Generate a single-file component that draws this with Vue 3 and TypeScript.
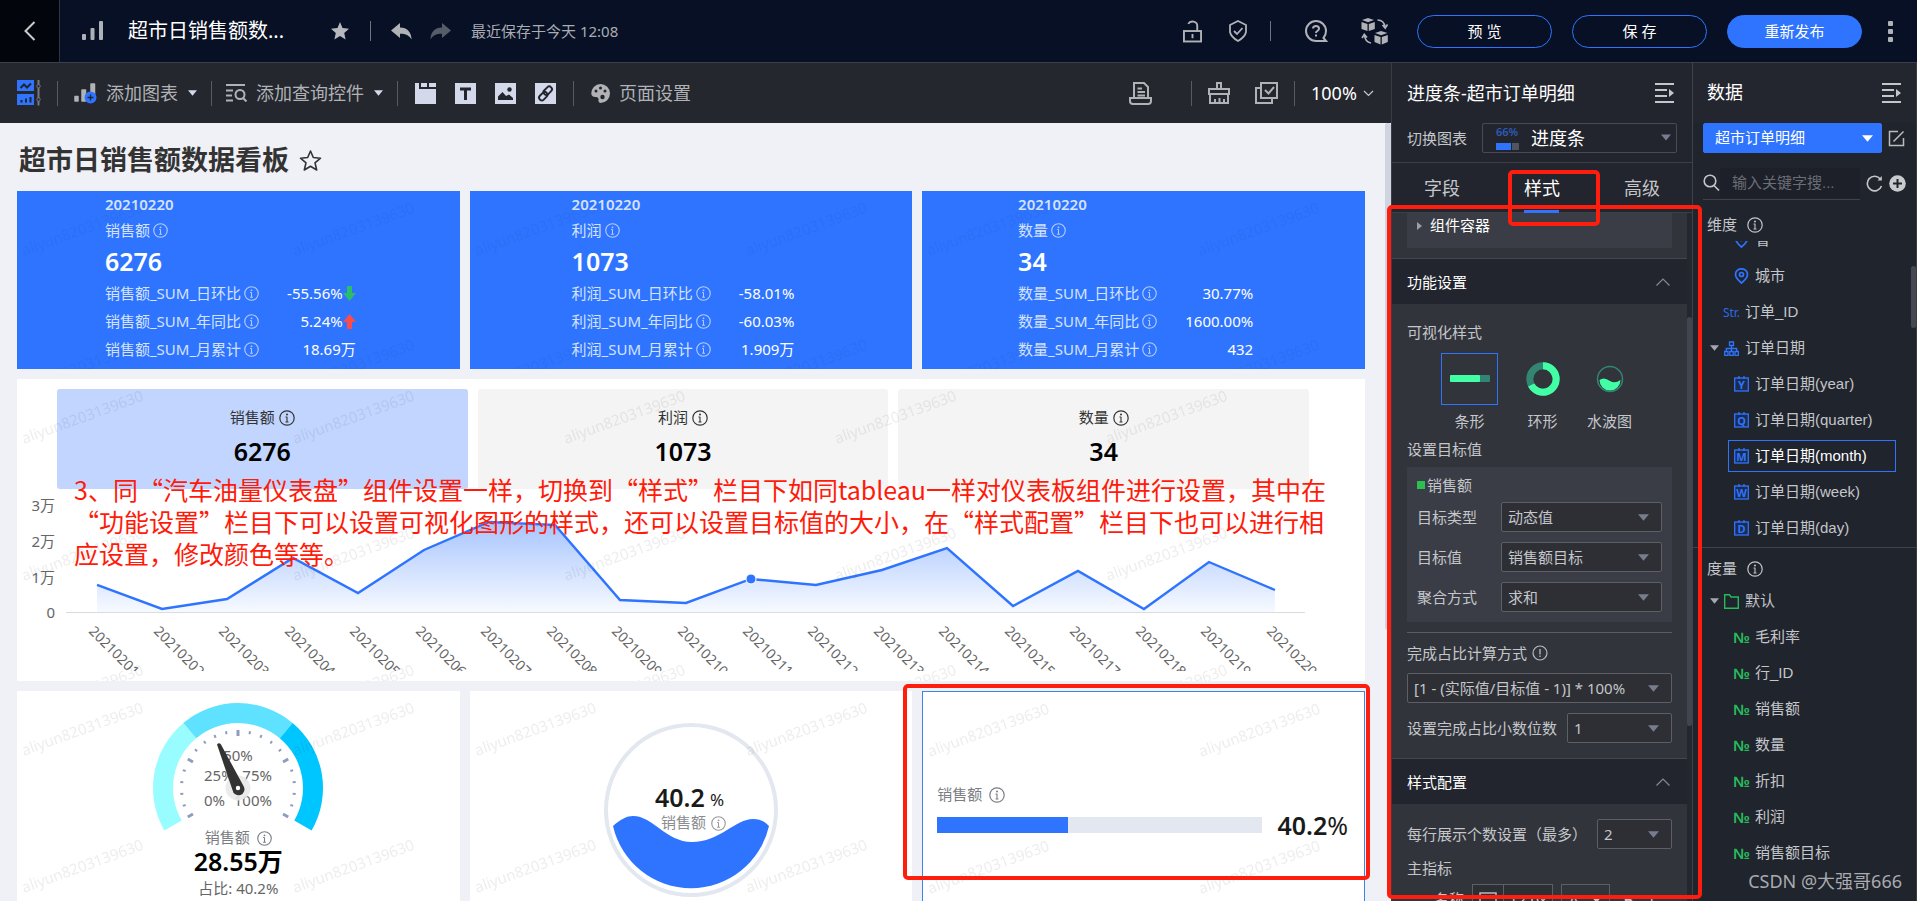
<script setup lang="ts">
import { ref } from 'vue'

interface Metric { label: string; value: string; trend?: 'up' | 'down' }
interface Kpi { name: string; value: string; rows: Metric[] }

const kpis: Kpi[] = [
  {
    name: '销售额', value: '6276', rows: [
      { label: '销售额_SUM_日环比', value: '-55.56%', trend: 'down' },
      { label: '销售额_SUM_年同比', value: '5.24%', trend: 'up' },
      { label: '销售额_SUM_月累计', value: '18.69万' },
    ],
  },
  {
    name: '利润', value: '1073', rows: [
      { label: '利润_SUM_日环比', value: '-58.01%' },
      { label: '利润_SUM_年同比', value: '-60.03%' },
      { label: '利润_SUM_月累计', value: '1.909万' },
    ],
  },
  {
    name: '数量', value: '34', rows: [
      { label: '数量_SUM_日环比', value: '30.77%' },
      { label: '数量_SUM_年同比', value: '1600.00%' },
      { label: '数量_SUM_月累计', value: '432' },
    ],
  },
]

const activeKpi = ref('销售额')

const levels = [96, 120, 110, 69, 104, 61, 33, 36, 111, 114, 90, 96, 81, 59, 117, 82, 120, 73, 101]
const days = ['01', '02', '03', '04', '05', '06', '07', '08', '09', '10', '11', '12', '13', '14', '15', '17', '18', '19', '20']
const points = levels.map((y, i) => ({ x: Math.round(79.5 + i * 65.45), y, label: '202102' + days[i] }))
const line = points.map((p) => `${p.x},${p.y}`).join(' ')
const area = `${points[0].x},123 ${line} ${points[points.length - 1].x},123`
const yTicks = [
  { label: '3万', y: 16 },
  { label: '2万', y: 52 },
  { label: '1万', y: 88 },
  { label: '0', y: 123 },
]

const polar = (r: number, deg: number) => {
  const a = (deg * Math.PI) / 180
  return { x: r * Math.cos(a), y: r * Math.sin(a) }
}
const arc = (from: number, to: number) => {
  const a = polar(85, from), b = polar(85, to), c = polar(65, to), d = polar(65, from)
  return `M${a.x} ${a.y}A85 85 0 0 1 ${b.x} ${b.y}L${c.x} ${c.y}A65 65 0 0 0 ${d.x} ${d.y}Z`
}
const arcs = [
  { d: arc(150, 230), fill: '#99fdff' },
  { d: arc(230, 310), fill: '#5ee2ff' },
  { d: arc(310, 390), fill: '#00c6ff' },
]
const ticks = Array.from({ length: 21 }, (_, i) => {
  const major = i % 5 === 0
  const a = polar(major ? 52 : 55, 150 + i * 12), b = polar(58, 150 + i * 12)
  return { x1: a.x, y1: a.y, x2: b.x, y2: b.y, w: major ? 3 : 2 }
})

const targets = [
  { id: 'type', label: '目标类型', value: '动态值' },
  { id: 'target', label: '目标值', value: '销售额目标' },
  { id: 'agg', label: '聚合方式', value: '求和' },
]
const dateFields = [
  { letter: 'Y', name: '订单日期(year)' },
  { letter: 'Q', name: '订单日期(quarter)' },
  { letter: 'M', name: '订单日期(month)' },
  { letter: 'W', name: '订单日期(week)' },
  { letter: 'D', name: '订单日期(day)' },
]
const selectedDate = ref('M')
const measures = ['毛利率', '行_ID', '销售额', '数量', '折扣', '利润', '销售额目标']
const vizStyle = ref('bar')
const zoomLevel = ref('100%')
</script>

<template>
  <div class="app">
    <svg class="sprite" width="0" height="0" aria-hidden="true">
      <symbol id="i-info" viewBox="0 0 16 16"><circle cx="8" cy="8" r="7.200" fill="none" stroke="currentColor" stroke-width="1.200" /><path d="M8 6.800V12M6.500 7H8M6.500 12H9.500" stroke="currentColor" stroke-width="1.100" /><circle cx="8" cy="4.600" r="1" fill="currentColor" /></symbol>
      <symbol id="i-down" viewBox="0 0 10 6"><path d="M0 0H10L5 6Z" fill="currentColor" /></symbol>
      <symbol id="i-fold" viewBox="0 0 20 20"><path d="M0 1H19M0 7H12M0 13H12M0 19H19" stroke="currentColor" stroke-width="2" fill="none" /><path d="M14 6L19 10L14 14Z" fill="currentColor" /></symbol>
      <symbol id="i-chev" viewBox="0 0 14 8"><path d="M.5 7.500L7 1L13.500 7.500" fill="none" stroke="currentColor" stroke-width="1.200" /></symbol>
      <pattern id="mark" width="271" height="137" patternUnits="userSpaceOnUse">
        <text x="7" y="65" transform="rotate(-20 7 65)" class="mark-text">aliyun8203139630</text>
      </pattern>
      <linearGradient id="area" x1="0" y1="0" x2="0" y2="1"><stop offset="0" stop-color="#2e74ff" stop-opacity=".42" /><stop offset="1" stop-color="#2e74ff" stop-opacity=".04" /></linearGradient>
    </svg>

    <header class="top">
      <button class="back" aria-label="返回"><svg width="12" height="20" viewBox="0 0 12 20"><path d="M10.500 1L1.500 10L10.500 19" fill="none" stroke="#ccc" stroke-width="2" /></svg></button>
      <svg class="bars" width="22" height="20" viewBox="0 0 22 20" fill="#aeb1b8"><rect y="13" width="4" height="6" rx="1" /><rect x="8.500" y="7" width="4" height="12" rx="1" /><rect x="17" width="4" height="19" rx="1" /></svg>
      <h1 class="doc">超市日销售额数...</h1>
      <button class="ico star" aria-label="收藏"><svg width="18" height="18" viewBox="0 0 18 18"><path d="M9 0L11.500 6L18 6.800L13.200 11L14.600 17.500L9 14L3.400 17.500L4.800 11L0 6.800L6.500 6Z" fill="#b6b8bd" /></svg></button>
      <i class="sep" />
      <button class="ico undo" aria-label="撤销"><svg width="21" height="17" viewBox="0 0 21 17"><path d="M9 0V4.500C16 4.500 20.500 9 20.500 16.500C18 12.500 15 10.800 9 10.800V15L0 7.500Z" fill="#b0b2b6" /></svg></button>
      <button class="ico redo" aria-label="重做"><svg width="21" height="17" viewBox="0 0 21 17"><path d="M12 0V4.500C5 4.500 .5 9 .5 16.500C3 12.500 6 10.800 12 10.800V15L21 7.500Z" fill="#575c69" /></svg></button>
      <span class="saved">最近保存于今天 12:08</span>
      <div class="top-right">
        <button class="ico" aria-label="解锁"><svg width="19" height="23" viewBox="0 0 20 23" fill="none" stroke="#b0b2b6" stroke-width="2"><rect x="1" y="11" width="18" height="11" /><path d="M15 11V5.500A5 4.500 0 0 0 5.500 3.500M10 14V18.500" /></svg></button>
        <button class="ico shield" aria-label="安全"><svg width="18" height="22" viewBox="0 0 18 22" fill="none" stroke="#b0b2b6" stroke-width="1.800"><path d="M9 1L17 5V12Q16 17 9 21Q2 17 1 12V5Z" /><path d="M5 11L8 14L13.500 8" /></svg></button>
        <i class="sep" />
        <button class="ico help" aria-label="帮助"><svg width="24" height="24" viewBox="0 0 24 24" fill="none" stroke="#b0b2b6" stroke-width="2"><path d="M22 22H12A10 10 0 1 1 22 12Q22 16 19.500 19Z" /><path d="M9 9.500Q9 7 12 7T15 9.500Q15 11 13.500 11.800Q12 12.500 12 14M12 15.500V17.500" /></svg></button>
        <button class="ico" aria-label="切换"><svg width="27" height="27" viewBox="0 0 27 27"><g fill="#b0b2b6"><path d="M7 0L13 2L7 4.200L1 2ZM.5 4L6.500 6V13L.5 11ZM7.800 6L13.800 4V11L7.800 13Z" /><path d="M20 13L26.500 15L20 17.200L14 15ZM13.500 17L19.500 19V26.500L13.500 24ZM20.800 19L26.800 17V24L20.800 26.500Z" /></g><path d="M16.500 2Q23 2 24 9M21.500 7L24.200 10L26.500 6.500M10 25Q4 24 3.500 17M1 20L3.300 16.500L6 19.500" fill="none" stroke="#b0b2b6" stroke-width="1.700" /></svg></button>
        <button class="pill first">预 览</button>
        <button class="pill">保 存</button>
        <button class="pill solid">重新发布</button>
        <button class="ico more" aria-label="更多"><svg width="5" height="21" viewBox="0 0 5 21" fill="#b0b2b6"><rect width="5" height="5" rx="1" /><rect y="8" width="5" height="5" rx="1" /><rect y="16" width="5" height="5" rx="1" /></svg></button>
      </div>
    </header>

    <main class="main">
      <nav class="tools">
        <button class="ico logo" aria-label="视图"><svg width="24" height="26" viewBox="0 0 24 26"><path d="M0 0H17V11H0ZM0 14H17V25H0Z" fill="#2e74ff" /><path d="M3.500 8L7 4.500L10 7.500L14 3.500" stroke="#22252d" stroke-width="2" fill="none" /><path d="M4.500 22.500V20M9 22.500V18.500M13.500 22.500V17" stroke="#22252d" stroke-width="2" /><g fill="none" stroke="#757980"><path d="M21.500 0V4.500M21.500 8V18M21.500 21V25.500" stroke-width="2" /><circle cx="21.500" cy="6.200" r="1.700" /><circle cx="21.500" cy="19.500" r="1.700" /></g></svg></button>
        <i class="sep tall" />
        <button class="tool add"><svg width="23" height="21" viewBox="0 0 23 21"><path d="M1 13.500H4V18H1ZM8 7H11.500V18H8ZM17 1H20.500V12H17Z" fill="#b0b2b6" stroke="#b0b2b6" stroke-width="1.500" stroke-linejoin="round" /><circle cx="16.500" cy="14.500" r="6" fill="#2e74ff" /><path d="M13.500 14.500H19.500M16.500 11.500V17.500" stroke="#22252d" stroke-width="1.300" /></svg><span>添加图表</span><svg class="tri" width="9" height="6"><use href="#i-down" /></svg></button>
        <i class="sep tall" />
        <button class="tool"><svg width="21" height="18" viewBox="0 0 21 18" fill="none" stroke="#b0b2b6" stroke-width="2"><path d="M0 1H19M0 6.500H7M0 11.500H6M0 16.500H7" /><circle cx="14" cy="10.500" r="4.500" /><path d="M17 14L20.500 17.500" /></svg><span>添加查询控件</span><svg class="tri" width="9" height="6"><use href="#i-down" /></svg></button>
        <i class="sep tall" />
        <div class="quick">
          <button class="ico" aria-label="标签页"><svg width="21" height="21" viewBox="0 0 21 21"><path d="M0 0H4V6H21V21H0ZM6 0H12V4H6ZM14 0H21V4H14Z" fill="#d3d9ea" /></svg></button>
          <button class="ico" aria-label="文本"><svg width="21" height="21" viewBox="0 0 21 21"><rect width="21" height="21" fill="#d3d9ea" /><path d="M5 6H16M10.500 6V17" stroke="#22252d" stroke-width="3" /></svg></button>
          <button class="ico" aria-label="图片"><svg width="21" height="21" viewBox="0 0 21 21"><rect width="21" height="21" fill="#d3d9ea" /><path d="M3 17V13.500L7.500 9L11 13L14 11.500L18 15V17Z" fill="#22252d" /><circle cx="14.500" cy="6.500" r="2.200" fill="#22252d" /></svg></button>
          <button class="ico" aria-label="链接"><svg width="21" height="21" viewBox="0 0 21 21"><rect width="21" height="21" fill="#d3d9ea" /><g fill="none" stroke="#22252d" stroke-width="1.900"><rect x="8" y="5" width="9.500" height="5.500" rx="2.700" transform="rotate(-45 12.700 7.700)" /><rect x="3.500" y="10.500" width="9.500" height="5.500" rx="2.700" transform="rotate(-45 8.200 13.200)" /></g></svg></button>
        </div>
        <i class="sep tall" />
        <button class="tool palette"><svg width="19" height="19" viewBox="0 0 19 19"><path d="M9.500 0A9.300 9.300 0 1 1 9.500 19Q7 18.500 7.500 16T5.500 13Q1 13.500 .3 10A9.500 9.500 0 0 1 9.500 0Z" fill="#b0b2b6" /><g fill="#22252d"><circle cx="5" cy="7" r="1.500" /><circle cx="9.500" cy="4" r="1.500" /><circle cx="14" cy="7" r="1.500" /><circle cx="11.500" cy="13" r="2.200" /></g></svg><span>页面设置</span></button>
        <div class="tools-right">
          <button class="ico" aria-label="记录"><svg width="23" height="23" viewBox="0 0 23 23" fill="none" stroke="#b0b2b6" stroke-width="2"><path d="M5 15V1H15L19 5V15M8.500 6.500H13M8.500 10H16M8.500 13.500H16M1 16H22V19Q22 22 19 22H4Q1 22 1 19Z" /></svg></button>
          <i class="sep tall" />
          <button class="ico" aria-label="清理"><svg width="22" height="22" viewBox="0 0 22 22" fill="none" stroke="#b0b2b6" stroke-width="2"><path d="M9 7V1H13V7M1 7H21V12H1ZM2 12V21H20V12M7 21V17M11.500 21V16M16 21V17" /></svg></button>
          <button class="ico pick" aria-label="批量选择"><svg width="23" height="22" viewBox="0 0 23 22" fill="none" stroke="#b0b2b6" stroke-width="2"><path d="M6 1H22V16H6ZM6 6H1V21H17V16M10 8L13.500 11.500L19 5" /></svg></button>
          <i class="sep tall" />
          <label class="zoom"><span class="sr">缩放</span><select v-model="zoomLevel"><option>100%</option></select><svg width="11" height="7" viewBox="0 0 11 7"><path d="M1 1L5.500 5.500L10 1" fill="none" stroke="#c8cad0" stroke-width="1.200" /></svg></label>
        </div>
      </nav>

      <div class="canvas">
        <div class="board">
          <h2 class="title">超市日销售额数据看板
            <svg width="23" height="23" viewBox="0 0 23 23"><path d="M11.500 2L14.300 8.500L21.500 9.200L16 13.800L17.700 21L11.500 17.200L5.300 21L7 13.800L1.500 9.200L8.700 8.500Z" fill="none" stroke="#333" stroke-width="1.600" stroke-linejoin="round" /></svg>
          </h2>

          <section v-for="k in kpis" :key="k.name" class="kpi">
            <div class="kpi-body">
              <strong class="kpi-date">20210220</strong>
              <span class="kpi-name">{{ k.name }}<svg class="info" width="15" height="15"><use href="#i-info" /></svg></span>
              <strong class="kpi-num">{{ k.value }}</strong>
              <template v-for="r in k.rows" :key="r.label">
                <span class="kpi-label">{{ r.label }}<svg class="info" width="15" height="15"><use href="#i-info" /></svg></span>
                <span class="kpi-val">{{ r.value }}<svg v-if="r.trend" width="13" height="15" viewBox="0 0 13 15"><path v-if="r.trend === 'down'" d="M4 0H9V7H13L6.500 15L0 7H4Z" fill="#2bbd6a" /><path v-else d="M4 15H9V8H13L6.500 0L0 8H4Z" fill="#fc4b4b" /></svg></span>
              </template>
            </div>
            <svg class="mark"><rect width="100%" height="100%" fill="url(#mark)" /></svg>
          </section>

          <section class="trend">
            <div class="cards">
              <button v-for="k in kpis" :key="k.name" class="card" :class="{ on: activeKpi === k.name }" @click="activeKpi = k.name">
                <span>{{ k.name }}<svg class="info" width="16" height="16"><use href="#i-info" /></svg></span>
                <strong>{{ k.value }}</strong>
              </button>
            </div>
            <svg class="chart" viewBox="0 0 1348 192" role="img" aria-label="销售额趋势">
              <text v-for="t in yTicks" :key="t.label" x="38" :y="t.y + 6" text-anchor="end" class="tick">{{ t.label }}</text>
              <path d="M49 123.500H1288" stroke="#d9dbe0" />
              <polygon :points="area" fill="url(#area)" />
              <polyline :points="line" fill="none" stroke="#2e74ff" stroke-width="2.400" />
              <circle :cx="points[10].x" :cy="points[10].y" r="5" fill="#2e74ff" stroke="#fff" />
              <svg x="0" y="130" width="1348" height="52" viewBox="0 130 1348 52">
                <text v-for="p in points" :key="p.label" class="tick day" :transform="`translate(${p.x - 9} 143) rotate(45)`">{{ p.label }}</text>
              </svg>
            </svg>
            <svg class="mark"><rect width="100%" height="100%" fill="url(#mark)" /></svg>
            <p class="note">3、同“汽车油量仪表盘”组件设置一样，切换到“样式”栏目下如同tableau一样对仪表板组件进行设置，其中在<br>“功能设置”栏目下可以设置可视化图形的样式，还可以设置目标值的大小，在“样式配置”栏目下也可以进行相<br>应设置，修改颜色等等。</p>
          </section>

          <section class="tile gauge">
            <svg width="180" height="136" viewBox="-90 -90 180 136" role="img" aria-label="占比 40.2%">
              <path v-for="a in arcs" :key="a.fill" :d="a.d" :fill="a.fill" />
              <line v-for="(t, i) in ticks" :key="i" :x1="t.x1" :y1="t.y1" :x2="t.x2" :y2="t.y2" :stroke-width="t.w" stroke="#8f9cc0" />
              <g class="tick"><text x="0" y="-27" text-anchor="middle">50%</text><text x="-34" y="-7">25%</text><text x="34" y="-7" text-anchor="end">75%</text><text x="-34" y="18">0%</text><text x="34" y="18" text-anchor="end">100%</text></g>
              <circle r="12.500" fill="#e9e9e9" fill-opacity=".9" />
              <path d="M-21 -43.500Q-19 -46 -17 -43.500L5.500 -2A6 6 0 1 1 -5.500 2Z" fill="#333" />
              <circle r="2.200" fill="#fff" />
            </svg>
            <span class="tile-name">销售额<svg class="info" width="15" height="15"><use href="#i-info" /></svg></span>
            <strong>28.55万</strong>
            <span class="share">占比: 40.2%</span>
            <svg class="mark"><rect width="100%" height="100%" fill="url(#mark)" /></svg>
          </section>

          <section class="tile liquid">
            <svg width="176" height="176" viewBox="-88 -88 176 176" role="img" aria-label="40.2%">
              <circle r="85" fill="#fff" stroke="#e3e7ef" stroke-width="4" />
              <path d="M-78 16C-70 9 -64 6 -58 6C-38 6 -25 32 1 32C28 32 45 9 62 9C70 9 74 12 78 16A80 80 0 0 1 -78 16Z" fill="#2e74ff" />
              <text x="-36" y="-3" class="liq-num">40.2</text><text x="19" y="-4" class="liq-pct">%</text>
              <text x="-30" y="18" class="liq-name">销售额</text>
              <g transform="translate(20 6)" color="#999"><use href="#i-info" width="15" height="15" /></g>
            </svg>
            <svg class="mark"><rect width="100%" height="100%" fill="url(#mark)" /></svg>
          </section>

          <section class="tile progress">
            <div class="progress-body">
              <span class="tile-name">销售额<svg class="info" width="16" height="16"><use href="#i-info" /></svg></span>
              <div class="progress-row"><div class="track"><div class="fill" /></div><span class="pct"><b>40.2</b>%</span></div>
            </div>
            <svg class="mark"><rect width="100%" height="100%" fill="url(#mark)" /></svg>
            <div class="frame frame-tile" />
          </section>
        </div>
        <div class="bar"><div class="bar-thumb" /></div>
      </div>
    </main>

    <aside class="props">
      <div class="phead"><h2>进度条-超市订单明细</h2><button class="ico" aria-label="收起"><svg width="20" height="20"><use href="#i-fold" /></svg></button></div>
      <div class="switch">
        <label for="chart">切换图表</label>
        <div class="pick-chart">
          <svg width="23" height="26" viewBox="0 0 23 26"><text x="0" y="11" class="mini">66%</text><path d="M0 18H15V25H0Z" fill="#2e74ff" /><path d="M16 18H23V25H16Z" fill="#515560" /></svg>
          <select id="chart"><option>进度条</option></select>
          <svg width="10" height="7"><use href="#i-down" /></svg>
        </div>
      </div>
      <div class="tabs">
        <button>字段</button><button class="on">样式<span class="frame frame-tab" /></button><button>高级</button>
      </div>
      <div class="pscroll">
        <div class="pcontent">
          <div class="pblock first"><div class="box container"><svg width="5" height="8" viewBox="0 0 5 8"><path d="M0 0L5 4L0 8Z" fill="#9b9ea6" /></svg>组件容器</div></div>
          <h3>功能设置<svg width="14" height="8"><use href="#i-chev" /></svg></h3>
          <div class="pblock func">
            <p class="cap">可视化样式</p>
            <div class="viz">
              <button :class="{ on: vizStyle === 'bar' }" @click="vizStyle = 'bar'"><span><svg width="40" height="8" viewBox="0 0 40 8"><rect width="40" height="7" rx="1" fill="#338573" /><rect width="30" height="7" rx="1" fill="#42ffa5" /></svg></span>条形</button>
              <button :class="{ on: vizStyle === 'ring' }" @click="vizStyle = 'ring'"><span><svg width="34" height="34" viewBox="-17 -17 34 34" fill="none" stroke-width="7"><circle r="13.200" stroke="#338573" /><path d="M0 -13.200A13.200 13.200 0 1 1 -11.800 6" stroke="#42ffa5" /></svg></span>环形</button>
              <button :class="{ on: vizStyle === 'water' }" @click="vizStyle = 'water'"><span><svg width="28" height="28" viewBox="-14 -14 28 28"><circle r="12.500" fill="none" stroke="#338573" stroke-width="1.500" /><path d="M-10.500 1Q-6 -2.500 0 2Q5 5 10.500 1A10.500 10.500 0 0 1 -10.500 1Z" fill="#42ffa5" /></svg></span>水波图</button>
            </div>
            <p class="cap goal">设置目标值</p>
            <div class="box target">
              <p class="series"><i />销售额</p>
              <div v-for="t in targets" :key="t.id" class="row">
                <label :for="t.id">{{ t.label }}</label>
                <div class="sel"><select :id="t.id"><option>{{ t.value }}</option></select><svg width="11" height="7"><use href="#i-down" /></svg></div>
              </div>
            </div>
            <hr>
            <label for="calc" class="calc">完成占比计算方式<svg width="16" height="16" viewBox="0 0 16 16"><circle cx="8" cy="8" r="7" fill="none" stroke="#b9bbc0" stroke-width="1.200" /><path d="M8 4V9.500M8 10.500V12" stroke="#b9bbc0" stroke-width="1.300" /></svg></label>
            <div class="sel"><select id="calc"><option>[1 - (实际值/目标值 - 1)] * 100%</option></select><svg width="11" height="7"><use href="#i-down" /></svg></div>
            <div class="row digits"><label for="digits">设置完成占比小数位数</label><div class="sel"><select id="digits"><option>1</option></select><svg width="11" height="7"><use href="#i-down" /></svg></div></div>
          </div>
          <h3>样式配置<svg width="14" height="8"><use href="#i-chev" /></svg></h3>
          <div class="pblock conf">
            <div class="row count"><label for="count">每行展示个数设置（最多）</label><div class="sel"><select id="count"><option>2</option></select><svg width="11" height="7"><use href="#i-down" /></svg></div></div>
            <p class="cap main-ind">主指标</p>
            <div class="font-row">
              <span>名称</span>
              <div class="size"><svg width="30" height="28" viewBox="0 0 30 28"><path d="M7 8H23V20H7Z" fill="none" stroke="#b9bbc0" stroke-width="1.500" /></svg><span>12 px</span></div>
              <button class="color">A<svg width="11" height="7"><use href="#i-down" /></svg></button>
              <button><b>B</b></button><button>T</button>
            </div>
          </div>
        </div>
        <div class="pbar"><div class="pbar-thumb" /></div>
      </div>
      <div class="frame frame-panel" />
    </aside>

    <aside class="data">
      <div class="phead"><h2>数据</h2><button class="ico" aria-label="收起"><svg width="20" height="20"><use href="#i-fold" /></svg></button></div>
      <div class="source">
        <div class="sel blue"><select aria-label="数据集"><option>超市订单明细</option></select><svg width="11" height="7"><use href="#i-down" /></svg></div>
        <button class="ico" aria-label="编辑"><svg width="17" height="17" viewBox="0 0 17 17" fill="none" stroke="#b9bbc0" stroke-width="1.500"><path d="M10 1.500H1.500V15.500H15.500V8M5.500 11.500L15.500 1.500" /></svg></button>
      </div>
      <div class="search">
        <div class="search-box"><svg width="17" height="17" viewBox="0 0 17 17" fill="none" stroke="#c4c6ca" stroke-width="1.600"><circle cx="7" cy="7" r="5.800" /><path d="M11 11.500L16 16.500" /></svg><input aria-label="搜索字段" placeholder="输入关键字搜..."></div>
        <button class="ico" aria-label="刷新"><svg width="17" height="17" viewBox="0 0 17 17"><path d="M15.500 11A7.300 7.300 0 1 1 14.500 4.200" fill="none" stroke="#c4c6ca" stroke-width="1.600" /><path d="M15.800 1V5.500H11.500Z" fill="#c4c6ca" /></svg></button>
        <button class="ico" aria-label="新建"><svg width="17" height="17" viewBox="0 0 17 17"><circle cx="8.500" cy="8.500" r="8.300" fill="#c8cace" /><path d="M8.500 4V13M4 8.500H13" stroke="#20242d" stroke-width="2" /></svg></button>
      </div>
      <div class="dims">
        <h3>维度<svg class="info" width="16" height="16"><use href="#i-info" /></svg></h3>
        <div class="dim-view">
          <ul class="tree">
            <li v-for="c in ['省', '城市']" :key="c" class="l2"><svg class="fi" width="15" height="16" viewBox="0 0 15 16" fill="none" stroke="#2e74ff" stroke-width="1.700"><path d="M7.500 15Q1.500 10 1.500 6.500A6 5.700 0 0 1 13.500 6.500Q13.500 10 7.500 15Z" /><circle cx="7.500" cy="6.500" r="2" /></svg>{{ c }}</li>
            <li class="l1"><span class="fi str">Str.</span>订单_ID</li>
            <li class="l1 open"><svg class="caret" width="9" height="6"><use href="#i-down" /></svg><svg class="fi" width="15" height="15" viewBox="0 0 15 15" fill="none" stroke="#2e74ff" stroke-width="1.300"><path d="M5.500 1H9.500V4.500H5.500ZM.7 10.500H4V14.300H.7ZM5.800 10.500H9.200V14.300H5.800ZM11 10.500H14.300V14.300H11ZM7.500 4.500V10.500M2.300 10.500V7.500H12.700V10.500" /></svg>订单日期</li>
            <li v-for="f in dateFields" :key="f.letter" class="l2" :class="{ picked: selectedDate === f.letter }" @click="selectedDate = f.letter"><svg class="fi" width="15" height="16" viewBox="0 0 15 16"><rect x=".7" y="2" width="13.600" height="13" fill="#1b2c50" stroke="#2e74ff" stroke-width="1.300" /><path d="M5 0V3M10 0V3" stroke="#2e74ff" stroke-width="1.300" /><text x="7.500" y="12.500" text-anchor="middle" class="letter">{{ f.letter }}</text></svg>{{ f.name }}</li>
          </ul>
          <div class="dthumb" />
        </div>
      </div>
      <div class="meas">
        <h3>度量<svg class="info" width="16" height="16"><use href="#i-info" /></svg></h3>
        <ul class="tree">
          <li class="l1 open folder"><svg class="caret" width="9" height="6"><use href="#i-down" /></svg><svg class="fi" width="15" height="15" viewBox="0 0 15 15"><path d="M.7 14.300V.8H5.500L7 3H14.300V14.300Z" fill="none" stroke="#27b95c" stroke-width="1.400" /></svg>默认</li>
          <li v-for="m in measures" :key="m" class="l2"><span class="fi num">№</span>{{ m }}</li>
        </ul>
      </div>
      <span class="credit">CSDN @大强哥666</span>
    </aside>
  </div>
</template>

<style>
html, body { margin: 0; background: #20242e; }
.mark-text { font: 15px "Noto Sans", sans-serif; fill: #000; fill-opacity: .07; }
</style>

<style scoped>
.app { display: grid; grid-template: 63px minmax(0, 1fr) / minmax(0, 1fr) 301px 225px; height: 100vh; overflow: hidden; font: 15px/20px "Noto Sans", "Noto Sans CJK SC", sans-serif; color: #c4c6ca; background: #22252d; }
.app *, .app *::before { box-sizing: border-box; }
.sprite { position: absolute; }
.sr { position: absolute; width: 1px; height: 1px; overflow: hidden; clip-path: inset(50%); }
h1, h2, h3, p, ul { margin: 0; padding: 0; font-size: 15px; font-weight: 400; list-style: none; }
button, select, input { font: inherit; color: inherit; background: none; border: 0; padding: 0; margin: 0; }
select { appearance: none; outline: none; }
button { cursor: pointer; }
svg { flex: none; display: block; }
.ico { display: flex; flex: none; }
.sep { width: 1px; height: 20px; background: #70747d; flex: none; }
.sep.tall { height: 25px; background: #575b63; }
.info { display: inline-block; }

.top { grid-column: 1 / -1; display: flex; align-items: center; background: #071024; border-bottom: 1px solid #3a3f4b; }
.back { width: 60px; height: 62px; display: flex; align-items: center; justify-content: center; background: #02050b; border-right: 1px solid #2e3442; }
.bars { margin-left: 22px; }
.doc { margin-left: 24px; width: 180px; font-size: 20px; line-height: 28px; color: #fff; white-space: nowrap; }
.star { margin: 0 21px 0 23px; }
.undo { margin: 0 18px 0 20px; }
.saved { margin-left: 20px; color: #a9acb4; }
.top-right { margin-left: auto; display: flex; align-items: center; }
.shield { margin: 0 23px 0 27px; }
.help { margin: 0 33px; }
.pill { width: 135px; height: 33px; margin-left: 20px; border: 1px solid #2e74ff; border-radius: 17px; color: #fff; }
.pill.first { margin-left: 29px; }
.pill.solid { background: #2e74ff; }
.more { margin: 0 24px 0 26px; }

.main { display: flex; flex-direction: column; min-height: 0; }
.tools { display: flex; align-items: center; height: 60px; flex: none; padding: 0 17px; background: #24272e; color: #b0b2b6; font-size: 18px; line-height: 26px; }
.tools > .sep { margin: 0 14px; }
.logo { margin-right: 2px; }
.tool { display: flex; align-items: center; gap: 9px; }
.add { margin-left: 2px; }
.tri { color: #d3d9ea; margin-left: 1px; }
.quick { display: flex; gap: 19px; margin: 0 3px; }
.palette { margin-left: 3px; }
.tools-right { display: flex; align-items: center; margin-left: auto; }
.tools-right .sep { margin: 0 16px; }
.tools-right .sep:first-of-type { margin: 0 16px 0 39px; }
.pick { margin-left: 25px; }
.zoom { display: flex; align-items: center; gap: 2px; color: #fff; position: relative; }
.zoom select { width: 50px; }

.canvas { flex: 1; min-height: 0; display: flex; overflow: hidden; background: #eff1f6; }
.board { flex: 1; display: grid; grid-template-columns: repeat(3, minmax(0, 1fr)); grid-template-rows: 58px 178px auto 230px; gap: 10px; padding: 0 20px 0 17px; align-content: start; color: #333; }
.title { grid-column: 1 / -1; display: flex; align-items: center; gap: 10px; padding: 8px 0 0 2px; height: 66px; font-size: 27px; line-height: 40px; font-weight: 600; color: #333; }
.bar { width: 6px; }
.bar-thumb { height: 507px; background: #cfd4e0; border-radius: 3px; }
.mark { position: absolute; inset: 0; width: 100%; height: 100%; pointer-events: none; }

.kpi { position: relative; background: #2e74ff; color: #d5e3ff; display: flex; justify-content: center; padding-right: 16px; }
.kpi .mark { opacity: .5; }
.kpi-body { display: grid; grid-template-columns: max-content max-content; grid-template-rows: 26px 26px 36px repeat(3, 28px); column-gap: 28px; align-items: center; align-content: start; }
.kpi-date, .kpi-name, .kpi-num { grid-column: 1 / -1; }
.kpi-date { font-weight: 600; }
.kpi-num { color: #fff; font-size: 25px; line-height: 34px; font-weight: 600; }
.kpi .info { margin-left: 3px; vertical-align: -2px; opacity: .8; }
.kpi-val { color: #fff; display: flex; align-items: center; justify-content: flex-end; }

.trend { grid-column: 1 / -1; position: relative; background: #fff; padding-top: 10px; }
.cards { display: grid; grid-template-columns: repeat(3, 1fr); gap: 10px; margin: 0 56px 0 40px; }
.card { height: 100px; display: flex; flex-direction: column; align-items: center; padding-top: 18px; background: #f4f4f4; border-radius: 3px; }
.card.on { background: #c1d5ff; }
.card .info { margin-left: 4px; vertical-align: -3px; }
.card strong { margin-top: 7px; font-size: 25px; line-height: 34px; font-weight: 600; color: #000; }
.chart { width: 100%; height: auto; }
.tick { font-size: 15px; fill: #666; }
.day { font-size: 14px; }
.note { position: absolute; left: 57px; top: 94px; font: 25px/32px "Noto Sans CJK SC", sans-serif; color: #ff1a0a; white-space: nowrap; pointer-events: none; }

.tile { position: relative; background: #fff; display: flex; flex-direction: column; align-items: center; }
.tile-name { color: #7b7d82; }
.tile-name .info { margin-left: 7px; vertical-align: -3px; }
.gauge { padding-top: 7px; }
.gauge strong { margin-top: -5px; font-size: 25px; line-height: 34px; font-weight: 600; color: #000; }
.gauge .tile-name { line-height: 24px; margin-top: -9px; }
.share { color: #666; }
.liquid { padding-top: 31px; }
.liq-num { font-size: 25px; font-weight: 600; fill: #1a1a1a; }
.liq-pct { font-size: 17px; fill: #1a1a1a; }
.liq-name { font-size: 15px; fill: #8a8c90; }
.progress { align-items: stretch; border: 1px solid #3b84ee; }
.progress-body { padding: 92px 16px 0 14px; }
.progress-row { display: flex; align-items: center; gap: 15px; margin-top: 4px; }
.track { flex: 1; height: 16px; background: #e3e7ef; }
.fill { width: 40.2%; height: 100%; background: #2e74ff; }
.pct { font-size: 25px; line-height: 34px; color: #1a1a1a; }
.pct b { font-weight: 600; }
.frame { position: absolute; border: 4px solid #ff1d0d; border-radius: 5px; pointer-events: none; z-index: 5; }
.frame-tile { left: -20px; right: -6px; top: -8px; height: 196px; }

.props { position: relative; display: flex; flex-direction: column; min-height: 0; border-left: 1px solid #3a3d46; }
.phead { display: flex; justify-content: space-between; align-items: center; height: 60px; padding: 0 17px 0 15px; color: #c4c6ca; flex: none; }
.phead h2 { font-size: 18px; line-height: 26px; color: #fff; }
.switch { display: flex; align-items: center; justify-content: space-between; height: 40px; padding: 0 15px 10px; border-bottom: 1px solid #3c3f46; flex: none; }
.pick-chart { display: flex; align-items: center; gap: 12px; width: 195px; height: 30px; padding: 0 5px 0 13px; border: 1px solid #484b52; border-radius: 2px; color: #777d8f; }
.pick-chart select { flex: 1; min-width: 0; font-size: 18px; color: #fff; }
.mini { font: 600 11px "Noto Sans", sans-serif; fill: #2c5cb8; }
.tabs { display: grid; grid-template-columns: repeat(3, 1fr); height: 50px; border-bottom: 1px solid #3c3f46; font-size: 18px; flex: none; }
.tabs button { position: relative; height: 50px; }
.tabs .on { color: #fff; }
.tabs .on::before { content: ""; position: absolute; left: 50%; bottom: 0; width: 35px; height: 3px; margin-left: -18px; background: #2e74ff; }
.frame-tab { left: 16px; right: -8px; top: 7px; bottom: -13px; z-index: 6; }
.frame-panel { left: -5px; right: -10px; top: 142px; bottom: 2px; }
.pscroll { flex: 1; min-height: 0; display: flex; overflow: hidden; }
.pcontent { flex: 1; min-width: 0; }
.pblock { background: #31343b; padding: 0 15px; border-bottom: 1px solid #44474e; }
.pblock.first { height: 46px; }
.box { background: #3a3d45; }
.container { display: flex; align-items: flex-start; gap: 8px; height: 35px; padding: 2px 10px; color: #fff; }
.container svg { margin-top: 7px; }
.props h3 { display: flex; justify-content: space-between; align-items: center; height: 45px; padding: 0 17px 0 15px; color: #fff; }
.props h3 svg { color: #868992; }
.func { height: 455px; padding-top: 18px; }
.viz { display: flex; margin: 11px 0 0 34px; gap: 10px; }
.viz button { width: 57px; display: flex; flex-direction: column; align-items: center; gap: 6px; white-space: nowrap; }
.viz button:nth-child(2) { margin-left: 6px; }
.viz span { width: 57px; height: 52px; display: flex; align-items: center; justify-content: center; border: 1px solid transparent; }
.viz .on span { border-color: #2e74ff; }
.goal { margin-top: 8px; }
.target { margin-top: 8px; padding: 8px 10px 10px; }
.series { display: flex; align-items: center; gap: 2px; margin-bottom: 7px; }
.series i { width: 8px; height: 8px; background: #2cc050; }
.row { display: flex; align-items: center; justify-content: space-between; }
.target .row + .row { margin-top: 10px; }
.target .sel { width: 161px; }
.sel { display: grid; align-items: center; color: #777d8f; }
.sel > * { grid-area: 1 / 1; }
.sel select { width: 100%; height: 30px; padding: 0 6px; border: 1px solid #5c5f66; border-radius: 2px; background: #2d2f35; color: #c4c6ca; }
.sel svg { justify-self: end; margin-right: 13px; pointer-events: none; }
hr { height: 1px; margin: 10px 0; border: 0; background: #5b5d62; }
.calc { display: flex; align-items: center; gap: 5px; margin-bottom: 10px; }
.digits { margin-top: 10px; }
.digits .sel { width: 105px; }
.conf { padding-top: 15px; height: 200px; }
.count .sel { width: 75px; }
.count label { white-space: nowrap; }
.main-ind { margin-top: 9px; }
.font-row { display: flex; align-items: center; gap: 8px; margin: 6px 0 0 27px; }
.size { display: flex; align-items: center; height: 30px; border: 1px solid #5c5f66; background: #2d2f35; }
.size span { width: 49px; text-align: center; border-left: 1px solid #5c5f66; height: 28px; line-height: 28px; }
.color { display: flex; align-items: center; gap: 12px; height: 30px; padding: 0 7px; border: 1px solid #5c5f66; color: #c4c6ca; }
.font-row button + button { margin-left: 6px; }
.pbar { width: 5px; padding-top: 104px; background: #24272e; }
.pbar-thumb { height: 409px; background: #42454f; border-radius: 3px; }

.data { position: relative; display: flex; flex-direction: column; min-height: 0; border-left: 1px solid #3f424b; border-right: 1px solid #3a3d46; background: #20242d; font-family: "Liberation Sans", "Noto Sans CJK SC", sans-serif; }
.data .phead { background: #23262e; padding: 0 14px; }
.source { display: flex; align-items: center; gap: 6px; padding: 0 11px 0 10px; }
.blue { flex: 1; color: #fff; }
.blue select { background: #2e74ff; border-color: #2e74ff; color: #fff; padding-left: 11px; }
.blue svg { margin-right: 9px; }
.search { display: flex; align-items: center; gap: 6px; height: 47px; padding: 0 10px; flex: none; }
.search-box { flex: 1; min-width: 0; display: flex; align-items: center; height: 34px; margin-top: 13px; align-self: flex-start; border-bottom: 1px solid #3f424b; }
.search-box input { flex: 1; min-width: 0; height: 30px; padding-left: 12px; background: #1d2028; outline: none; }
.search-box input::placeholder { color: #6a6e77; opacity: 1; }
.search > .ico { margin-top: 13px; }
.data h3 { padding-left: 14px; height: 20px; }
.data h3 .info { margin-left: 10px; vertical-align: -3px; }
.dims { padding-top: 15px; flex: none; border-bottom: 1px solid #3f424b; }
.dim-view { position: relative; height: 306px; margin-top: 6px; overflow: hidden; }
.dim-view .tree { margin-top: -19px; }
.dthumb { position: absolute; right: 0; top: 25px; width: 5px; height: 62px; border-radius: 3px; background: #454852; }
.tree li { display: flex; align-items: center; height: 36px; white-space: nowrap; }
.fi { width: 15px; margin-right: 6px; flex: none; }
.l1 { padding-left: 31px; }
.l1.open { padding-left: 17px; }
.caret { margin-right: 5px; color: #a5a7ab; }
.l2 { padding-left: 41px; }
.l2.picked { color: #fff; position: relative; }
.l2.picked::before { content: ""; position: absolute; left: 35px; top: 2px; width: 168px; height: 32px; border: 1px solid #2e74ff; }
.str { font: 12px "Noto Sans", sans-serif; color: #2e6ae6; display: flex; justify-content: center; }
.num { font: 700 15px "Liberation Sans", sans-serif; color: #27b95c; display: flex; justify-content: center; }
.letter { font: 700 11px "Noto Sans", sans-serif; fill: #2e74ff; }
.meas { padding-top: 11px; }
.meas .folder { margin-top: 4px; }
.credit { position: absolute; right: 14px; bottom: 8px; font: 18px/24px "Noto Sans", "Noto Sans CJK SC", sans-serif; color: #a9abb0; }
</style>
